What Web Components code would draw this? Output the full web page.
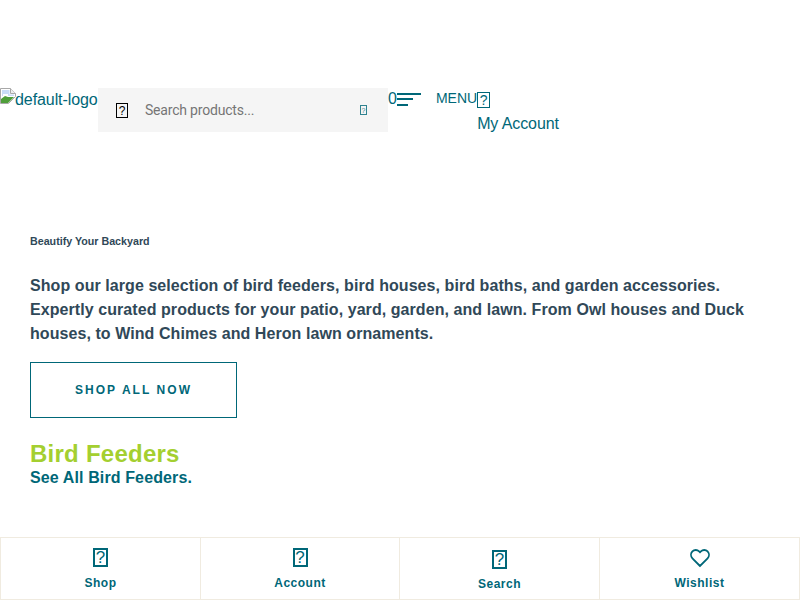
<!DOCTYPE html>
<html>
<head>
<meta charset="utf-8">
<title>Bird Feeders</title>
<style>
  html, body { margin: 0; padding: 0; }
  body { font-family: "Liberation Sans", Arial, sans-serif; font-size: 16px; color: #304858; background: #fff; }
</style>
</head>
<body>
<shop-page>
  <site-header></site-header>
  <hero-intro
    kicker="Beautify Your Backyard"
    cta="SHOP ALL NOW">
    Shop our large selection of bird feeders, bird houses, bird baths, and garden accessories. Expertly curated products for your patio, yard, garden, and lawn. From Owl houses and Duck houses, to Wind Chimes and Heron lawn ornaments.
  </hero-intro>
  <category-head title="Bird Feeders" link="See All Bird Feeders."></category-head>
  <bottom-nav slot="footer">
    <nav-cell label="Shop"></nav-cell>
    <nav-cell label="Account"></nav-cell>
    <nav-cell label="Search" low></nav-cell>
    <nav-cell label="Wishlist" heart></nav-cell>
  </bottom-nav>
</shop-page>

<script>
// stand-in for the icon font glyphs that did not load (box with a question mark)
class tofuGlyph extends HTMLElement {
  constructor() {
    super();
    const shadowRoot = this.attachShadow({ mode: "open" });
    shadowRoot.innerHTML = `
      <style>
        :host {
          display: inline-flex; align-items: center; justify-content: center;
          box-sizing: border-box; flex-shrink: 0;
          width: var(--w, 15px); height: var(--h, 19px);
          border: var(--b, 2px) solid currentColor;
          font: 400 var(--f, 17px)/1 "Liberation Sans", Arial, sans-serif;
        }
      </style>
      ?
    `;
  }
}

class shopPage extends HTMLElement {
  constructor() {
    super();
    const shadowRoot = this.attachShadow({ mode: "open" });
    shadowRoot.innerHTML = `
      <style>
        :host { display: flex; flex-direction: column; height: 100vh; padding-top: 88px; box-sizing: border-box; overflow: hidden; }
        .footer { margin-top: auto; }
      </style>
      <slot></slot>
      <div class="footer"><slot name="footer"></slot></div>
    `;
  }
}

class siteHeader extends HTMLElement {
  constructor() {
    super();
    const shadowRoot = this.attachShadow({ mode: "open" });
    shadowRoot.innerHTML = `
      <style>
        :host { display: flex; align-items: flex-start; height: 44px; color: #006778; }
        .logo { display: flex; align-items: flex-start; width: 98px; line-height: 22px; white-space: nowrap; padding-top: 1px; box-sizing: border-box; letter-spacing: -0.08px; }
        .logo svg { flex-shrink: 0; margin-top: -1px; margin-right: -1px; }
        .search { display: flex; align-items: center; width: 290px; height: 44px; background: #f5f5f5; flex-shrink: 0; }
        .search__icon { color: #000; margin-left: 18px; margin-top: 1px; --w: 12px; --h: 15px; --f: 12px; --b: 1.5px; }
        .search__text { font-family: Roboto, sans-serif; font-size: 14px; letter-spacing: -0.2px; color: #757575; margin-left: 17px; flex: 1; }
        .search__go { margin-right: 21px; --w: 7px; --h: 10px; --f: 7px; --b: 1px; opacity: .8; }
        .count { line-height: 22px; }
        .burger { display: flex; flex-direction: column; gap: 3px; align-items: flex-start; width: 24px; margin-top: 5px; }
        .burger i { display: block; height: 2px; background: #006778; }
        .burger i:last-child { margin-top: 1px; }
        .menu { font-size: 14px; margin-left: 15px; line-height: 20px; }
        .account { display: flex; flex-direction: column; align-items: flex-start; line-height: 24px; padding-top: 4px; letter-spacing: -0.1px; }
        .account tofu-glyph { --w: 13px; --h: 16px; --f: 14px; --b: 1.5px; margin-bottom: 4px; }
      </style>
      <a class="logo">
        <svg width="16" height="16" viewBox="0 0 16 16">
          <path d="M.5.5h10l5 5v3l-7 7H.5z" fill="#fff" stroke="#a8a8a8"/>
          <path d="M10.5.5v5h5" fill="#eee" stroke="#a8a8a8"/>
          <path d="M2 2h7.5v4.5H14V8H2z" fill="#c9dcf7"/>
          <path d="M3 6h5v2H3z" fill="#fff"/>
          <path d="M1 15v-4l4-3 3 1 6 0-6 6z" fill="#4f9e3a"/>
        </svg>
        <span>default-logo</span>
      </a>
      <div class="search">
        <tofu-glyph class="search__icon"></tofu-glyph>
        <span class="search__text">Search products...</span>
        <tofu-glyph class="search__go"></tofu-glyph>
      </div>
      <span class="count">0</span>
      <span class="burger">
        <i style="width:24px"></i><i style="width:16px"></i><i style="width:11px"></i>
      </span>
      <span class="menu">MENU</span>
      <span class="account">
        <tofu-glyph></tofu-glyph>
        <span>My Account</span>
      </span>
    `;
  }
}

class heroIntro extends HTMLElement {
  constructor() {
    super();
    const shadowRoot = this.attachShadow({ mode: "open" });
    shadowRoot.innerHTML = `
      <style>
        :host { display: block; padding: 102px 30px 0; }
        .kicker { font-size: 10.7px; font-weight: 700; line-height: 14px; }
        .copy { font-weight: 700; line-height: 24px; margin-top: 26px; letter-spacing: 0.07px; }
        .cta {
          display: flex; align-items: center; justify-content: center;
          width: 207px; height: 56px; box-sizing: border-box; margin-top: 16px;
          border: 1px solid #006778; color: #006778;
          font-size: 12px; font-weight: 700; letter-spacing: 2.05px;
        }
      </style>
      <div class="kicker"></div>
      <div class="copy"><slot></slot></div>
      <a class="cta"></a>
    `;
    shadowRoot.querySelector(".kicker").textContent = this.getAttribute("kicker");
    shadowRoot.querySelector(".cta").textContent = this.getAttribute("cta");
  }
}

class categoryHead extends HTMLElement {
  constructor() {
    super();
    const shadowRoot = this.attachShadow({ mode: "open" });
    shadowRoot.innerHTML = `
      <style>
        :host { display: block; padding: 22px 30px 0; }
        h2 { margin: 0; font-size: 24px; line-height: 28px; font-weight: 700; letter-spacing: 0.25px; color: #a4cf30; }
        a { display: block; font-weight: 700; line-height: 20px; letter-spacing: 0.12px; color: #006778; }
      </style>
      <h2></h2>
      <a></a>
    `;
    shadowRoot.querySelector("h2").textContent = this.getAttribute("title");
    shadowRoot.querySelector("a").textContent = this.getAttribute("link");
  }
}

class bottomNav extends HTMLElement {
  constructor() {
    super();
    const shadowRoot = this.attachShadow({ mode: "open" });
    shadowRoot.innerHTML = `
      <style>
        :host { display: grid; grid-template-columns: 200px 199px 200px 201px; height: 63px; }
      </style>
      <slot></slot>
    `;
  }
}

class navCell extends HTMLElement {
  constructor() {
    super();
    const shadowRoot = this.attachShadow({ mode: "open" });
    const icon = this.hasAttribute("heart")
      ? `<svg width="20" height="20" viewBox="0 0 20 20" fill="none" stroke="#006778" stroke-width="1.8"><path d="M10 18 2.4 10.3a5 5 0 0 1 0-6.9 4.7 4.7 0 0 1 6.7 0l.9.9.9-.9a4.7 4.7 0 0 1 6.7 0 5 5 0 0 1 0 6.9z"/></svg>`
      : `<tofu-glyph></tofu-glyph>`;
    shadowRoot.innerHTML = `
      <style>
        :host {
          display: flex; flex-direction: column; align-items: center;
          box-sizing: border-box; height: 63px; margin-right: -1px;
          border: 1px solid #f0ebe0; color: #006778;
          padding-top: 10px;
        }
        :host(:last-child) { margin-right: 0; }
        :host([low]) { padding-top: 12px; }
        .icon { display: flex; height: 22px; align-items: flex-start; justify-content: center; }
        .label { font-size: 12px; font-weight: 700; letter-spacing: 0.5px; line-height: 14px; margin-top: 6px; }
        :host([low]) .label { margin-top: 5px; }
      </style>
      <span class="icon">${icon}</span>
      <span class="label"></span>
    `;
    shadowRoot.querySelector(".label").textContent = this.getAttribute("label");
  }
}

customElements.define("tofu-glyph", tofuGlyph);
customElements.define("shop-page", shopPage);
customElements.define("site-header", siteHeader);
customElements.define("hero-intro", heroIntro);
customElements.define("category-head", categoryHead);
customElements.define("bottom-nav", bottomNav);
customElements.define("nav-cell", navCell);
</script>
</body>
</html>
